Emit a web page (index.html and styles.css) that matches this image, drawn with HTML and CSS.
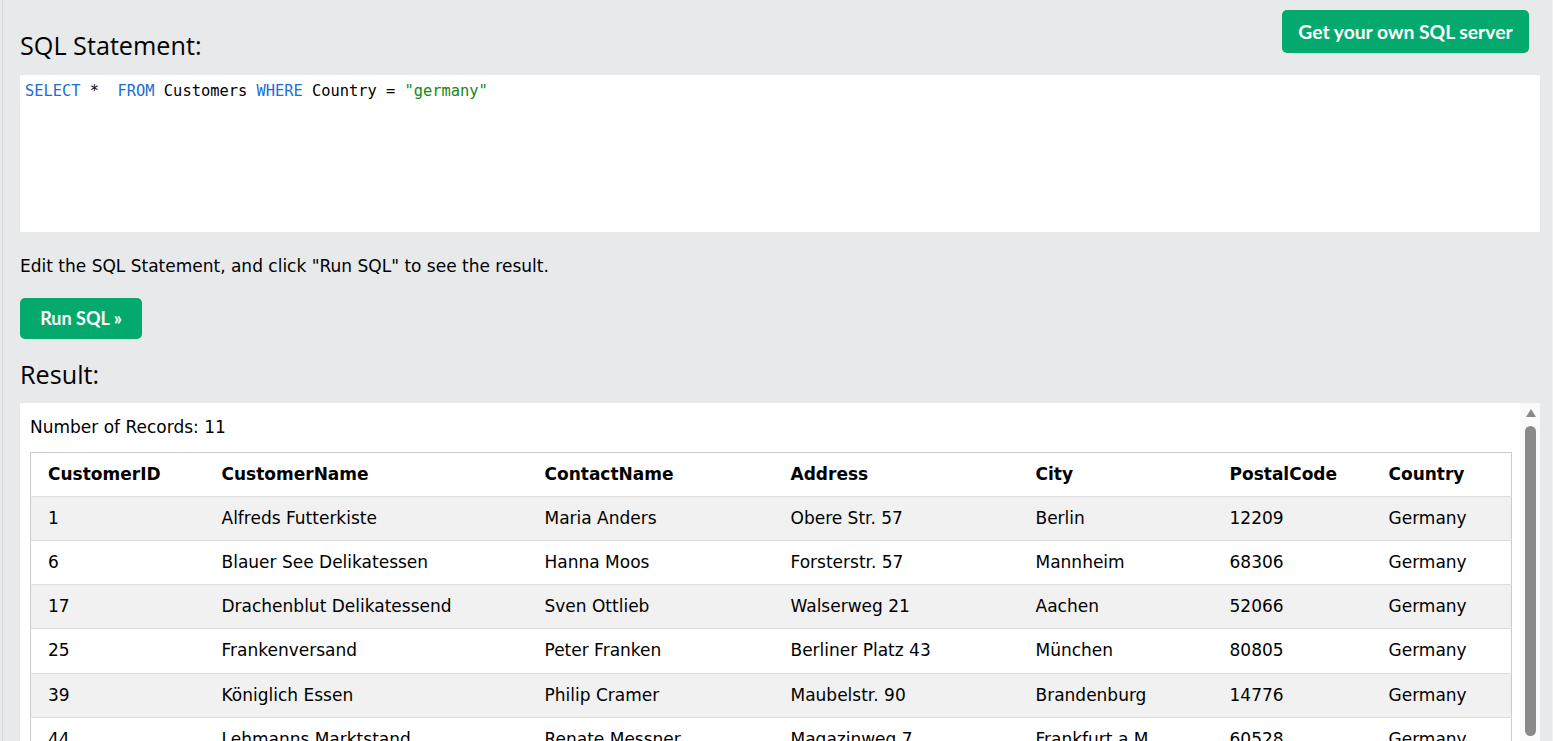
FILE: index.html
```html
<!DOCTYPE html>
<html>
<head>
<meta charset="utf-8">
<link rel="stylesheet" href="styles.css">
</head>
<body>
<div class="frame">
  <div class="top">
    <h2 class="heading">SQL Statement:</h2>
    <a class="btn btn-server">Get your own SQL server</a>
  </div>
  <div class="code"><span class="kw">SELECT</span> *  <span class="kw">FROM</span> Customers <span class="kw">WHERE</span> Country = <span class="str">"germany"</span></div>
  <p class="hint">Edit the SQL Statement, and click "Run SQL" to see the result.</p>
  <a class="btn btn-run">Run SQL »</a>
  <h2 class="heading result-h">Result:</h2>
  <div class="result">
    <div class="result-content">
      <div class="count">Number of Records: 11</div>
      <table class="grid">
        <colgroup>
          <col class="c1"><col class="c2"><col class="c3"><col class="c4"><col class="c5"><col class="c6"><col class="c7">
        </colgroup>
        <tr><th>CustomerID</th><th>CustomerName</th><th>ContactName</th><th>Address</th><th>City</th><th>PostalCode</th><th>Country</th></tr>
        <tr><td>1</td><td>Alfreds Futterkiste</td><td>Maria Anders</td><td>Obere Str. 57</td><td>Berlin</td><td>12209</td><td>Germany</td></tr>
        <tr><td>6</td><td>Blauer See Delikatessen</td><td>Hanna Moos</td><td>Forsterstr. 57</td><td>Mannheim</td><td>68306</td><td>Germany</td></tr>
        <tr><td>17</td><td>Drachenblut Delikatessend</td><td>Sven Ottlieb</td><td>Walserweg 21</td><td>Aachen</td><td>52066</td><td>Germany</td></tr>
        <tr><td>25</td><td>Frankenversand</td><td>Peter Franken</td><td>Berliner Platz 43</td><td>München</td><td>80805</td><td>Germany</td></tr>
        <tr><td>39</td><td>Königlich Essen</td><td>Philip Cramer</td><td>Maubelstr. 90</td><td>Brandenburg</td><td>14776</td><td>Germany</td></tr>
        <tr><td>44</td><td>Lehmanns Marktstand</td><td>Renate Messner</td><td>Magazinweg 7</td><td>Frankfurt a.M.</td><td>60528</td><td>Germany</td></tr>
        <tr><td>52</td><td>Morgenstern Gesundkost</td><td>Alexander Feuer</td><td>Heerstr. 22</td><td>Leipzig</td><td>04179</td><td>Germany</td></tr>
      </table>
    </div>
    <div class="scrollbar">
      <div class="arrow"></div>
      <div class="thumb"></div>
    </div>
  </div>
</div>
</body>
</html>
```
FILE: styles.css
```css
html, body {
  margin: 0;
  padding: 0;
  height: 100%;
  overflow: hidden;
  background: #e7e9eb;
}
body {
  font-family: "DejaVu Sans", Verdana, sans-serif;
  font-size: 17px;
  color: #000;
}
.frame {
  height: 741px;
  margin-left: 2px;
  border-left: 1px solid #dadada;
  border-right: 1px solid #f2f2f2;
  padding: 10px 12px 0 17px;
  box-sizing: border-box;
  display: flex;
  flex-direction: column;
  overflow: hidden;
}
.top {
  display: flex;
  justify-content: space-between;
  align-items: flex-start;
}
.heading {
  font-family: "Open Sans", "Segoe UI", sans-serif;
  font-weight: 400;
  font-size: 25.2px;
  line-height: 32px;
  margin: 19px 0 0 0;
  color: #000;
}
.btn {
  display: inline-block;
  background: #04aa6d;
  color: #fff;
  font-family: "Lato", "Source Sans Pro", sans-serif;
  font-weight: 700;
  border-radius: 5px;
  text-align: center;
  box-sizing: border-box;
}
.btn-server {
  width: 247px;
  height: 43px;
  line-height: 43px;
  font-size: 19.3px;
  margin-right: 11px;
}
.code {
  margin-top: 14px;
  background: #fff;
  height: 157px;
  box-sizing: border-box;
  padding: 6px 5px;
  font-family: "DejaVu Sans Mono", "Liberation Mono", monospace;
  font-size: 15.38px;
  line-height: 20px;
  white-space: pre;
  color: #000;
}
.kw { color: #1a6ed8; }
.str { color: #12881a; }
.hint {
  margin: 23px 0 0 0;
  line-height: 22px;
}
.btn-run {
  margin-top: 21px;
  width: 122px;
  height: 41px;
  line-height: 41px;
  font-size: 18px;
  align-self: flex-start;
}
.result-h {
  margin-top: 17px;
  line-height: 36px;
}
.result {
  margin-top: 11px;
  background: #fff;
  flex: 1;
  display: flex;
  min-height: 0;
}
.result-content {
  flex: 1;
  padding: 13px 8px 0 10px;
  min-width: 0;
}
.count {
  line-height: 22px;
  margin-bottom: 14px;
}
.grid {
  width: 100%;
  border-collapse: collapse;
  table-layout: fixed;
  border: 1px solid #ccc;
}
.c1 { width: 183px; }
.c2 { width: 323px; }
.c3 { width: 246px; }
.c4 { width: 245px; }
.c5 { width: 194px; }
.c6 { width: 159px; }
.grid th, .grid td {
  text-align: left;
  padding: 10px 8px;
  line-height: 23.3px;
  border-bottom: 1px solid #ddd;
  white-space: nowrap;
  overflow: hidden;
}
.grid th { font-weight: 700; line-height: 22.5px; }
.grid th:first-child, .grid td:first-child { padding-left: 17px; }
.grid tr:nth-child(even) { background: #f1f1f1; }
.scrollbar {
  width: 20px;
  background: #fafafa;
  display: flex;
  flex-direction: column;
  align-items: center;
  padding-top: 6px;
  box-sizing: border-box;
}
.arrow {
  width: 0;
  height: 0;
  border-left: 5px solid transparent;
  border-right: 5px solid transparent;
  border-bottom: 8px solid #8a8a8a;
  margin-left: 1px;
}
.thumb {
  margin-top: 9px;
  width: 11px;
  height: 310px;
  background: #8a8a8a;
  border-radius: 6px;
  margin-left: 1px;
}
```
